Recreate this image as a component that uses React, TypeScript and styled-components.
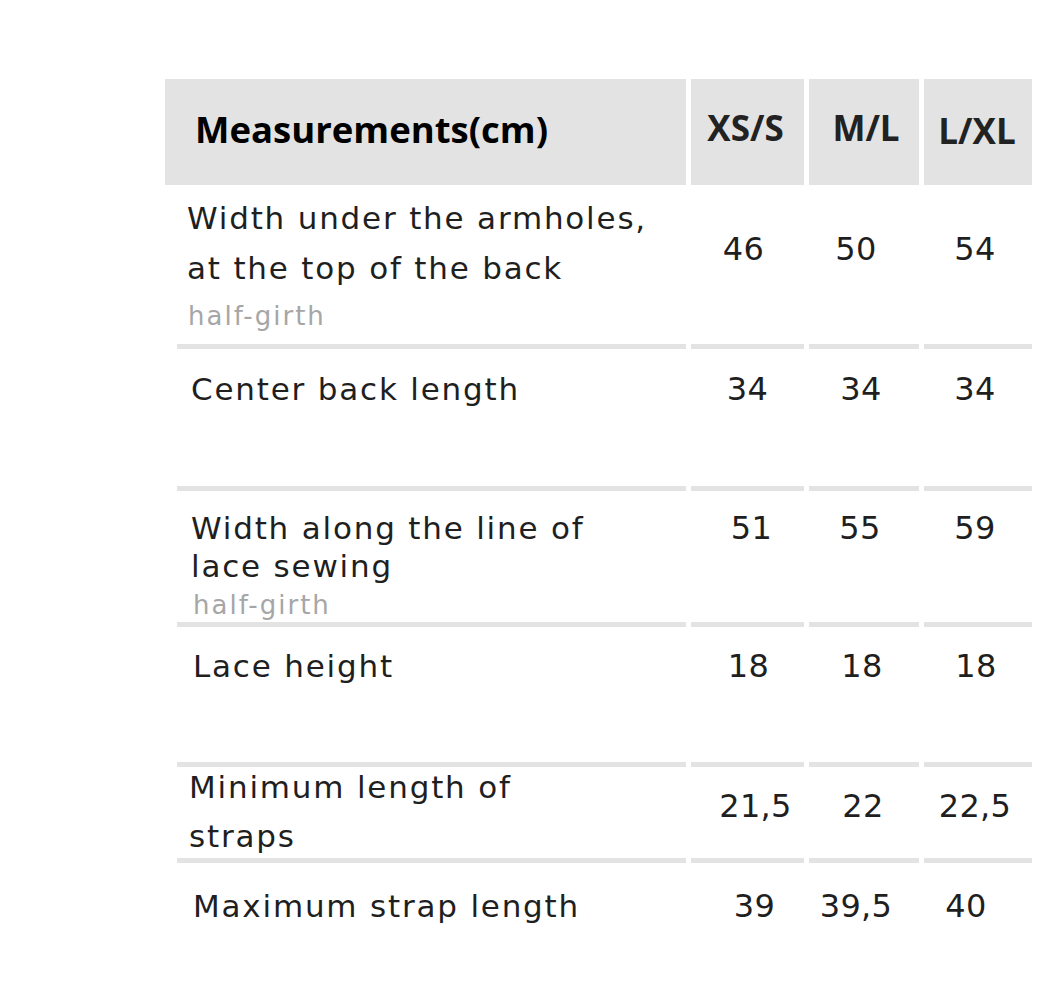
import React from 'react';
import styled, { createGlobalStyle } from 'styled-components';

const GlobalStyle = createGlobalStyle`
  html, body {
    margin: 0;
    padding: 0;
    background: #ffffff;
  }
  body {
    font-family: "DejaVu Sans", "Noto Sans", sans-serif;
  }
`;

const Page = styled.div`
  width: 1037px;
  height: 982px;
  padding: 79px 0 0 165px;
  box-sizing: border-box;
  overflow: hidden;
`;

const Table = styled.div`
  display: grid;
  grid-template-columns: 521px 113px 110px 108px;
  column-gap: 5px;
`;

const HeadCell = styled.div<{ $left?: boolean; $lift: number; $shift?: number }>`
  height: 106px;
  box-sizing: border-box;
  background: #e3e3e3;
  display: flex;
  align-items: center;
  justify-content: ${p => (p.$left ? 'flex-start' : 'center')};
  padding-left: ${p => (p.$left ? 30 : Math.max(0, 2 * (p.$shift || 0)))}px;
  padding-right: ${p => Math.max(0, -2 * (p.$shift || 0))}px;
  padding-bottom: ${p => p.$lift}px;
  font-family: "Open Sans", "Liberation Sans", sans-serif;
  font-weight: 700;
  font-size: ${p => (p.$left ? 36.5 : 35)}px;
  color: ${p => (p.$left ? '#000000' : '#222222')};
  white-space: nowrap;
`;

const Cell = styled.div<{ $h: number; $first?: boolean; $last?: boolean }>`
  height: ${p => p.$h}px;
  box-sizing: border-box;
  margin-left: ${p => (p.$first ? 12 : 0)}px;
  border-bottom: ${p => (p.$last ? 'none' : '5px solid #e3e3e3')};
  color: #1f1f1f;
  font-size: 31px;
  letter-spacing: 1.8px;
`;

const Label = styled.div<{ $top: number; $left: number; $lh: number }>`
  margin-top: ${p => p.$top}px;
  padding-left: ${p => p.$left}px;
  line-height: ${p => p.$lh}px;
  white-space: nowrap;
`;

const Note = styled.div<{ $gap: number; $left: number }>`
  margin-top: ${p => p.$gap}px;
  padding-left: ${p => p.$left}px;
  font-size: 26px;
  line-height: 30px;
  letter-spacing: 2px;
  color: #a6a6a6;
`;

const Value = styled.div<{ $top: number; $shift: number }>`
  margin-top: ${p => p.$top}px;
  font-size: 32px;
  line-height: 40px;
  letter-spacing: 0.3px;
  text-align: center;
  padding-left: ${p => Math.max(0, 2 * p.$shift)}px;
  padding-right: ${p => Math.max(0, -2 * p.$shift)}px;
  white-space: nowrap;
`;

type Row = {
  h: number;
  lines: string[];
  lh: number;
  top: number;
  left: number;
  note?: { gap: number; left: number };
  vTop: number;
  values: [string, number][];
};

const rows: Row[] = [
  {
    h: 164,
    lines: ['Width under the armholes,', 'at the top of the back'],
    lh: 50,
    top: 8,
    left: 10,
    note: { gap: 8, left: 11 },
    vTop: 44,
    values: [['46', -4], ['50', -8], ['54', -3]],
  },
  {
    h: 142,
    lines: ['Center back length'],
    lh: 40,
    top: 20,
    left: 14,
    vTop: 20,
    values: [['34', 0], ['34', -3], ['34', -3]],
  },
  {
    h: 136,
    lines: ['Width along the line of', 'lace sewing'],
    lh: 38,
    top: 18,
    left: 14,
    note: { gap: 5, left: 16 },
    vTop: 17,
    values: [['51', 4], ['55', -4], ['59', -3]],
  },
  {
    h: 140,
    lines: ['Lace height'],
    lh: 40,
    top: 19,
    left: 16,
    vTop: 19,
    values: [['18', 1], ['18', -2], ['18', -2]],
  },
  {
    h: 96,
    lines: ['Minimum length of', 'straps'],
    lh: 49,
    top: -4,
    left: 12,
    vTop: 19,
    values: [['21,5', 8], ['22', -1], ['22,5', -3]],
  },
  {
    h: 119,
    lines: ['Maximum strap length'],
    lh: 40,
    top: 23,
    left: 16,
    vTop: 23,
    values: [['39', 7], ['39,5', -8], ['40', -12]],
  },
];

const sizes: [string, number, number][] = [
  ['XS/S', -2, 10],
  ['M/L', 2, 10],
  ['L/XL', -1, 3],
];

export default function App() {
  return (
    <>
      <GlobalStyle />
      <Page>
        <Table>
          <HeadCell $left $lift={7}>Measurements(cm)</HeadCell>
          {sizes.map(([s, shift, lift]) => (
            <HeadCell key={s} $shift={shift} $lift={lift}>
              {s}
            </HeadCell>
          ))}
          {rows.map((r, i) => {
            const last = i === rows.length - 1;
            return (
              <React.Fragment key={i}>
                <Cell $h={r.h} $first $last={last}>
                  <Label $top={r.top} $left={r.left} $lh={r.lh}>
                    {r.lines.map(l => (
                      <div key={l}>{l}</div>
                    ))}
                  </Label>
                  {r.note && (
                    <Note $gap={r.note.gap} $left={r.note.left}>
                      half-girth
                    </Note>
                  )}
                </Cell>
                {r.values.map(([v, shift], j) => (
                  <Cell key={j} $h={r.h} $last={last}>
                    <Value $top={r.vTop} $shift={shift}>
                      {v}
                    </Value>
                  </Cell>
                ))}
              </React.Fragment>
            );
          })}
        </Table>
      </Page>
    </>
  );
}
